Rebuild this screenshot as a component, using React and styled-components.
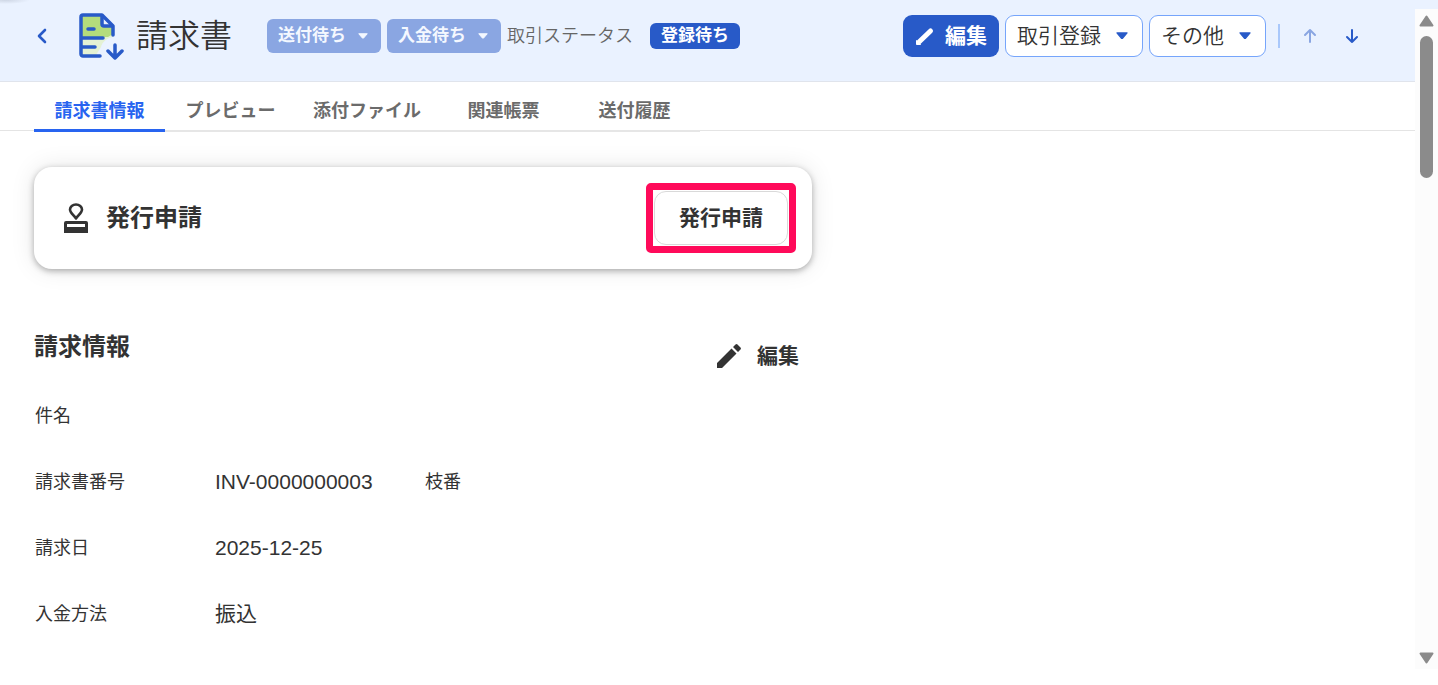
import React from "react";
import styled, { createGlobalStyle } from "styled-components";

const tabs = [
  "請求書情報",
  "プレビュー",
  "添付ファイル",
  "関連帳票",
  "送付履歴",
];

const Caret = ({ size = 12 }) => (
  <svg width={size} height={size * 0.6} viewBox="0 0 20 12" aria-hidden="true">
    <path
      d="M1.500 1.500h17L11.200 10a1.600 1.600 0 0 1-2.400 0z"
      fill="currentColor"
      stroke="currentColor"
      strokeWidth="2"
      strokeLinejoin="round"
    />
  </svg>
);

const InvoiceIcon = () => (
  <svg width="46" height="48" viewBox="0 0 46 48" fill="none" aria-hidden="true">
    <path d="M3 3h20l11 10v12c-6 1-11 5-12 10l-5 8H3z" fill="#e4f1d4" />
    <path d="M3 3h20l11 10v9l-5 3H3z" fill="#b4dc7c" />
    <path d="M24 3l10 10H26a2 2 0 0 1-2-2z" fill="#eaf2ff" />
    <g
      stroke="#285ac8"
      strokeWidth="3.5"
      strokeLinecap="round"
      strokeLinejoin="round"
    >
      <path d="M21 44H4a2 2 0 0 1-2-2V5a2 2 0 0 1 2-2h19l11 11v9" />
      <path d="M23 4v8a2 2 0 0 0 2 2h8" />
      <path d="M9 17h6M3 26h21M3 35h13" />
      <path d="M36 33v13M29 39l7 7 7-7" />
    </g>
  </svg>
);

const StampIcon = () => (
  <svg width="24" height="30" viewBox="0 0 24 30" aria-hidden="true">
    <path
      d="M12 15.500C9 11.500 6 9.500 6 6.500a6 5 0 0 1 12 0C18 9.500 15 11.500 12 15.500z"
      fill="none"
      stroke="#333"
      strokeWidth="2.6"
      strokeLinejoin="round"
    />
    <path
      d="M2 18h20a2 2 0 0 1 2 2v10H0V20a2 2 0 0 1 2-2zM3 21v3h18v-3z"
      fill="#333"
      fillRule="evenodd"
    />
  </svg>
);

const Pencil = () => (
  <svg width="24" height="24" viewBox="0 0 24 24" aria-hidden="true">
    <path
      d="M0 24v-5L14.500 4.500l5 5L5 24zM16 3l2.500-2.500a1.500 1.500 0 0 1 2 0l3 3a1.500 1.500 0 0 1 0 2L21 8z"
      fill="currentColor"
    />
  </svg>
);

const App = () => {
  return (
    <Page>
      <GlobalStyle />
      <TopStrip />
      <Viewport>
        <Content>
          <Header>
            <BackLink href="#back" aria-label="戻る">
              <svg width="10" height="16" viewBox="0 0 10 16" fill="none">
                <path
                  d="M8 2L2 8l6 6"
                  stroke="currentColor"
                  strokeWidth="2.6"
                  strokeLinecap="round"
                  strokeLinejoin="round"
                />
              </svg>
            </BackLink>
            <InvoiceIcon />
            <Title>請求書</Title>
            <Statuses>
              <StatusButton>
                送付待ち
                <Caret size={10} />
              </StatusButton>
              <StatusButton>
                入金待ち
                <Caret size={10} />
              </StatusButton>
              <StatusLabel>取引ステータス</StatusLabel>
              <Badge>登録待ち</Badge>
            </Statuses>
            <Actions>
              <PrimaryButton>
                <svg width="20" height="20" viewBox="0 0 20 20">
                  <path
                    d="M4 16L15.500 5"
                    stroke="#fff"
                    strokeWidth="5"
                    strokeLinecap="round"
                  />
                  <path
                    d="M1.500 18.500v-4l4 4z"
                    fill="#fff"
                    stroke="#fff"
                    strokeLinejoin="round"
                  />
                </svg>
                編集
              </PrimaryButton>
              <MenuButton>
                取引登録
                <Caret size={12} />
              </MenuButton>
              <MenuButton>
                その他
                <Caret size={12} />
              </MenuButton>
              <Divider />
              <ArrowButton aria-label="前へ" disabled>
                <svg width="14" height="16" viewBox="0 0 14 16" fill="none">
                  <path
                    d="M7 14V2M2 7l5-5 5 5"
                    stroke="currentColor"
                    strokeWidth="2"
                    strokeLinecap="round"
                    strokeLinejoin="round"
                  />
                </svg>
              </ArrowButton>
              <ArrowButton aria-label="次へ">
                <svg width="14" height="16" viewBox="0 0 14 16" fill="none">
                  <path
                    d="M7 2v12M2 9l5 5 5-5"
                    stroke="currentColor"
                    strokeWidth="2"
                    strokeLinecap="round"
                    strokeLinejoin="round"
                  />
                </svg>
              </ArrowButton>
            </Actions>
          </Header>

          <TabBar>
            <TabList role="tablist">
              {tabs.map((tab, i) => (
                <Tab key={tab} role="tab" aria-selected={i === 0} $active={i === 0}>
                  {tab}
                </Tab>
              ))}
            </TabList>
          </TabBar>

          <Main>
            <Card>
              <StampIcon />
              <Heading>発行申請</Heading>
              <Highlight>
                <ApplyButton>発行申請</ApplyButton>
              </Highlight>
            </Card>

            <SectionHead>
              <Heading>請求情報</Heading>
              <EditButton>
                <Pencil />
                編集
              </EditButton>
            </SectionHead>

            <Details>
              <Row>
                <Label>件名</Label>
              </Row>
              <Row>
                <Label>請求書番号</Label>
                <Value>INV-0000000003</Value>
                <Label>枝番</Label>
              </Row>
              <Row>
                <Label>請求日</Label>
                <Value>2025-12-25</Value>
              </Row>
              <Row>
                <Label>入金方法</Label>
                <Value>振込</Value>
              </Row>
            </Details>
          </Main>
        </Content>

        <ScrollBar>
          <svg width="15" height="12" viewBox="0 0 15 12">
            <path
              d="M7.500 1.500L13.500 10.500h-12z"
              fill="#8b8b8b"
              stroke="#8b8b8b"
              strokeWidth="2"
              strokeLinejoin="round"
            />
          </svg>
          <Thumb />
          <svg width="15" height="12" viewBox="0 0 15 12">
            <path
              d="M7.500 10.500L1.500 1.500h12z"
              fill="#8b8b8b"
              stroke="#8b8b8b"
              strokeWidth="2"
              strokeLinejoin="round"
            />
          </svg>
        </ScrollBar>
      </Viewport>
    </Page>
  );
};

const GlobalStyle = createGlobalStyle`
  * {
    box-sizing: border-box;
  }
  body {
    margin: 0;
    background: #fff;
    color: #333;
    font-family: "Liberation Sans", "Noto Sans CJK JP", sans-serif;
  }
  button {
    font-family: inherit;
    border: none;
    background: none;
    padding: 0;
    color: inherit;
    line-height: 26px;
    white-space: nowrap;
  }
  svg {
    display: block;
    flex-shrink: 0;
  }
`;

const Page = styled.div`
  height: 100vh;
  padding-bottom: 16px;
  display: flex;
  flex-direction: column;
  overflow: hidden;
`;

const TopStrip = styled.div`
  height: 9px;
  flex-shrink: 0;
  background: radial-gradient(
      ellipse 24px 4px at 6px 0,
      rgba(60, 70, 90, 0.16),
      transparent
    )
    #eaf2ff;
`;

const Viewport = styled.div`
  flex: 1;
  min-height: 0;
  display: flex;
`;

const Content = styled.div`
  flex: 1;
  min-width: 0;
`;

const Header = styled.header`
  display: flex;
  align-items: center;
  height: 73px;
  padding: 0 51px 18px 37px;
  background: #eaf2ff;
  border-bottom: 1px solid #e0e4ec;
`;

const BackLink = styled.a`
  color: #285ac8;
  margin-right: 32px;
`;

const Title = styled.h1`
  margin: 0 0 0 11px;
  font-size: 32px;
  line-height: 48px;
  font-weight: 350;
  white-space: nowrap;
`;

const Statuses = styled.div`
  display: flex;
  align-items: center;
  gap: 6px;
  margin-left: 35px;
`;

const StatusButton = styled.button`
  display: flex;
  align-items: center;
  justify-content: space-between;
  width: 114px;
  height: 34px;
  padding: 0 13px 0 11px;
  border-radius: 6px;
  background: #8aa6e2;
  color: #f4f8ff;
  font-size: 17px;
  font-weight: 700;
`;

const StatusLabel = styled.span`
  font-size: 18px;
  line-height: 26px;
  font-weight: 350;
  color: #666;
  white-space: nowrap;
`;

const Badge = styled.span`
  margin-left: 11px;
  padding: 0 11px;
  border-radius: 6px;
  background: #285ac8;
  color: #fff;
  font-size: 17px;
  line-height: 26px;
  font-weight: 700;
  white-space: nowrap;
`;

const Actions = styled.div`
  display: flex;
  align-items: center;
  gap: 6px;
  margin-left: auto;
`;

const PrimaryButton = styled.button`
  display: flex;
  align-items: center;
  gap: 10px;
  height: 42px;
  padding: 0 12px;
  border-radius: 9px;
  background: #285ac8;
  color: #fff;
  font-size: 21px;
  font-weight: 700;
`;

const MenuButton = styled.button`
  display: flex;
  align-items: center;
  gap: 15px;
  height: 42px;
  padding: 0 14px 0 11px;
  border: 1px solid #76a5fb;
  border-radius: 9px;
  background: #fff;
  font-size: 21px;
  font-weight: 350;

  svg {
    color: #285ac8;
  }
`;

const Divider = styled.div`
  width: 2px;
  height: 24px;
  margin: 0 12px 0 6px;
  background: #a9c8fb;
`;

const ArrowButton = styled.button`
  display: flex;
  justify-content: center;
  width: 24px;
  color: #285ac8;

  & + & {
    margin-left: 12px;
  }
  &:disabled {
    color: #8aa6e2;
  }
`;

const TabBar = styled.nav`
  display: flex;
  height: 49px;
  padding: 0 34px;
  border-bottom: 1px solid #e4e4e4;
`;

const TabList = styled.div`
  display: flex;
  height: 50px;
  border-bottom: 2px solid #e6e6e6;
`;

const Tab = styled.button`
  min-width: 131px;
  height: 50px;
  padding: 11px 17px 0;
  border-bottom: 3px solid ${({ $active }) => ($active ? "#2864f0" : "transparent")};
  color: ${({ $active }) => ($active ? "#2864f0" : "#6b6b6b")};
  font-size: 18px;
  font-weight: 700;
`;

const Main = styled.main`
  max-width: 846px;
  padding: 36px 34px 0;
`;

const Card = styled.section`
  display: flex;
  align-items: center;
  height: 102px;
  padding: 0 16px 0 30px;
  border-radius: 18px;
  background: #fff;
  box-shadow: 0 0 24px rgba(0, 0, 0, 0.1), 0 2px 6px rgba(0, 0, 0, 0.3);

  h2 {
    margin-left: 18px;
  }
`;

const Heading = styled.h2`
  margin: 0;
  font-size: 24px;
  line-height: 36px;
  font-weight: 700;
`;

const Highlight = styled.div`
  margin-left: auto;
  padding: 1px;
  border: 7px solid #ff0a5a;
  border-radius: 5px;
`;

const ApplyButton = styled.button`
  display: block;
  height: 54px;
  padding: 0 24px;
  border: 1px solid #d9d9d9;
  border-radius: 12px;
  font-size: 21px;
  font-weight: 700;
`;

const SectionHead = styled.div`
  display: flex;
  align-items: flex-start;
  justify-content: space-between;
  padding: 60px 13px 0 0;
`;

const EditButton = styled.button`
  display: flex;
  align-items: center;
  gap: 16px;
  height: 54px;
  font-size: 21px;
  font-weight: 700;
`;

const Details = styled.div`
  padding-left: 1px;
`;

const Row = styled.div`
  display: flex;
  align-items: center;
  height: 66px;
`;

const Label = styled.span`
  width: 180px;
  font-size: 18px;
  line-height: 26px;
  font-weight: 400;
`;

const Value = styled.span`
  width: 210px;
  font-size: 21px;
  line-height: 26px;
`;

const ScrollBar = styled.div`
  display: flex;
  flex-direction: column;
  align-items: center;
  width: 23px;
  padding: 6px 0 5px;
  background: #fcfcfc;

  svg:last-child {
    margin-top: auto;
  }
`;

const Thumb = styled.div`
  width: 13px;
  height: 142px;
  margin-top: 9px;
  border-radius: 7px;
  background: #8b8b8b;
`;

export default App;
